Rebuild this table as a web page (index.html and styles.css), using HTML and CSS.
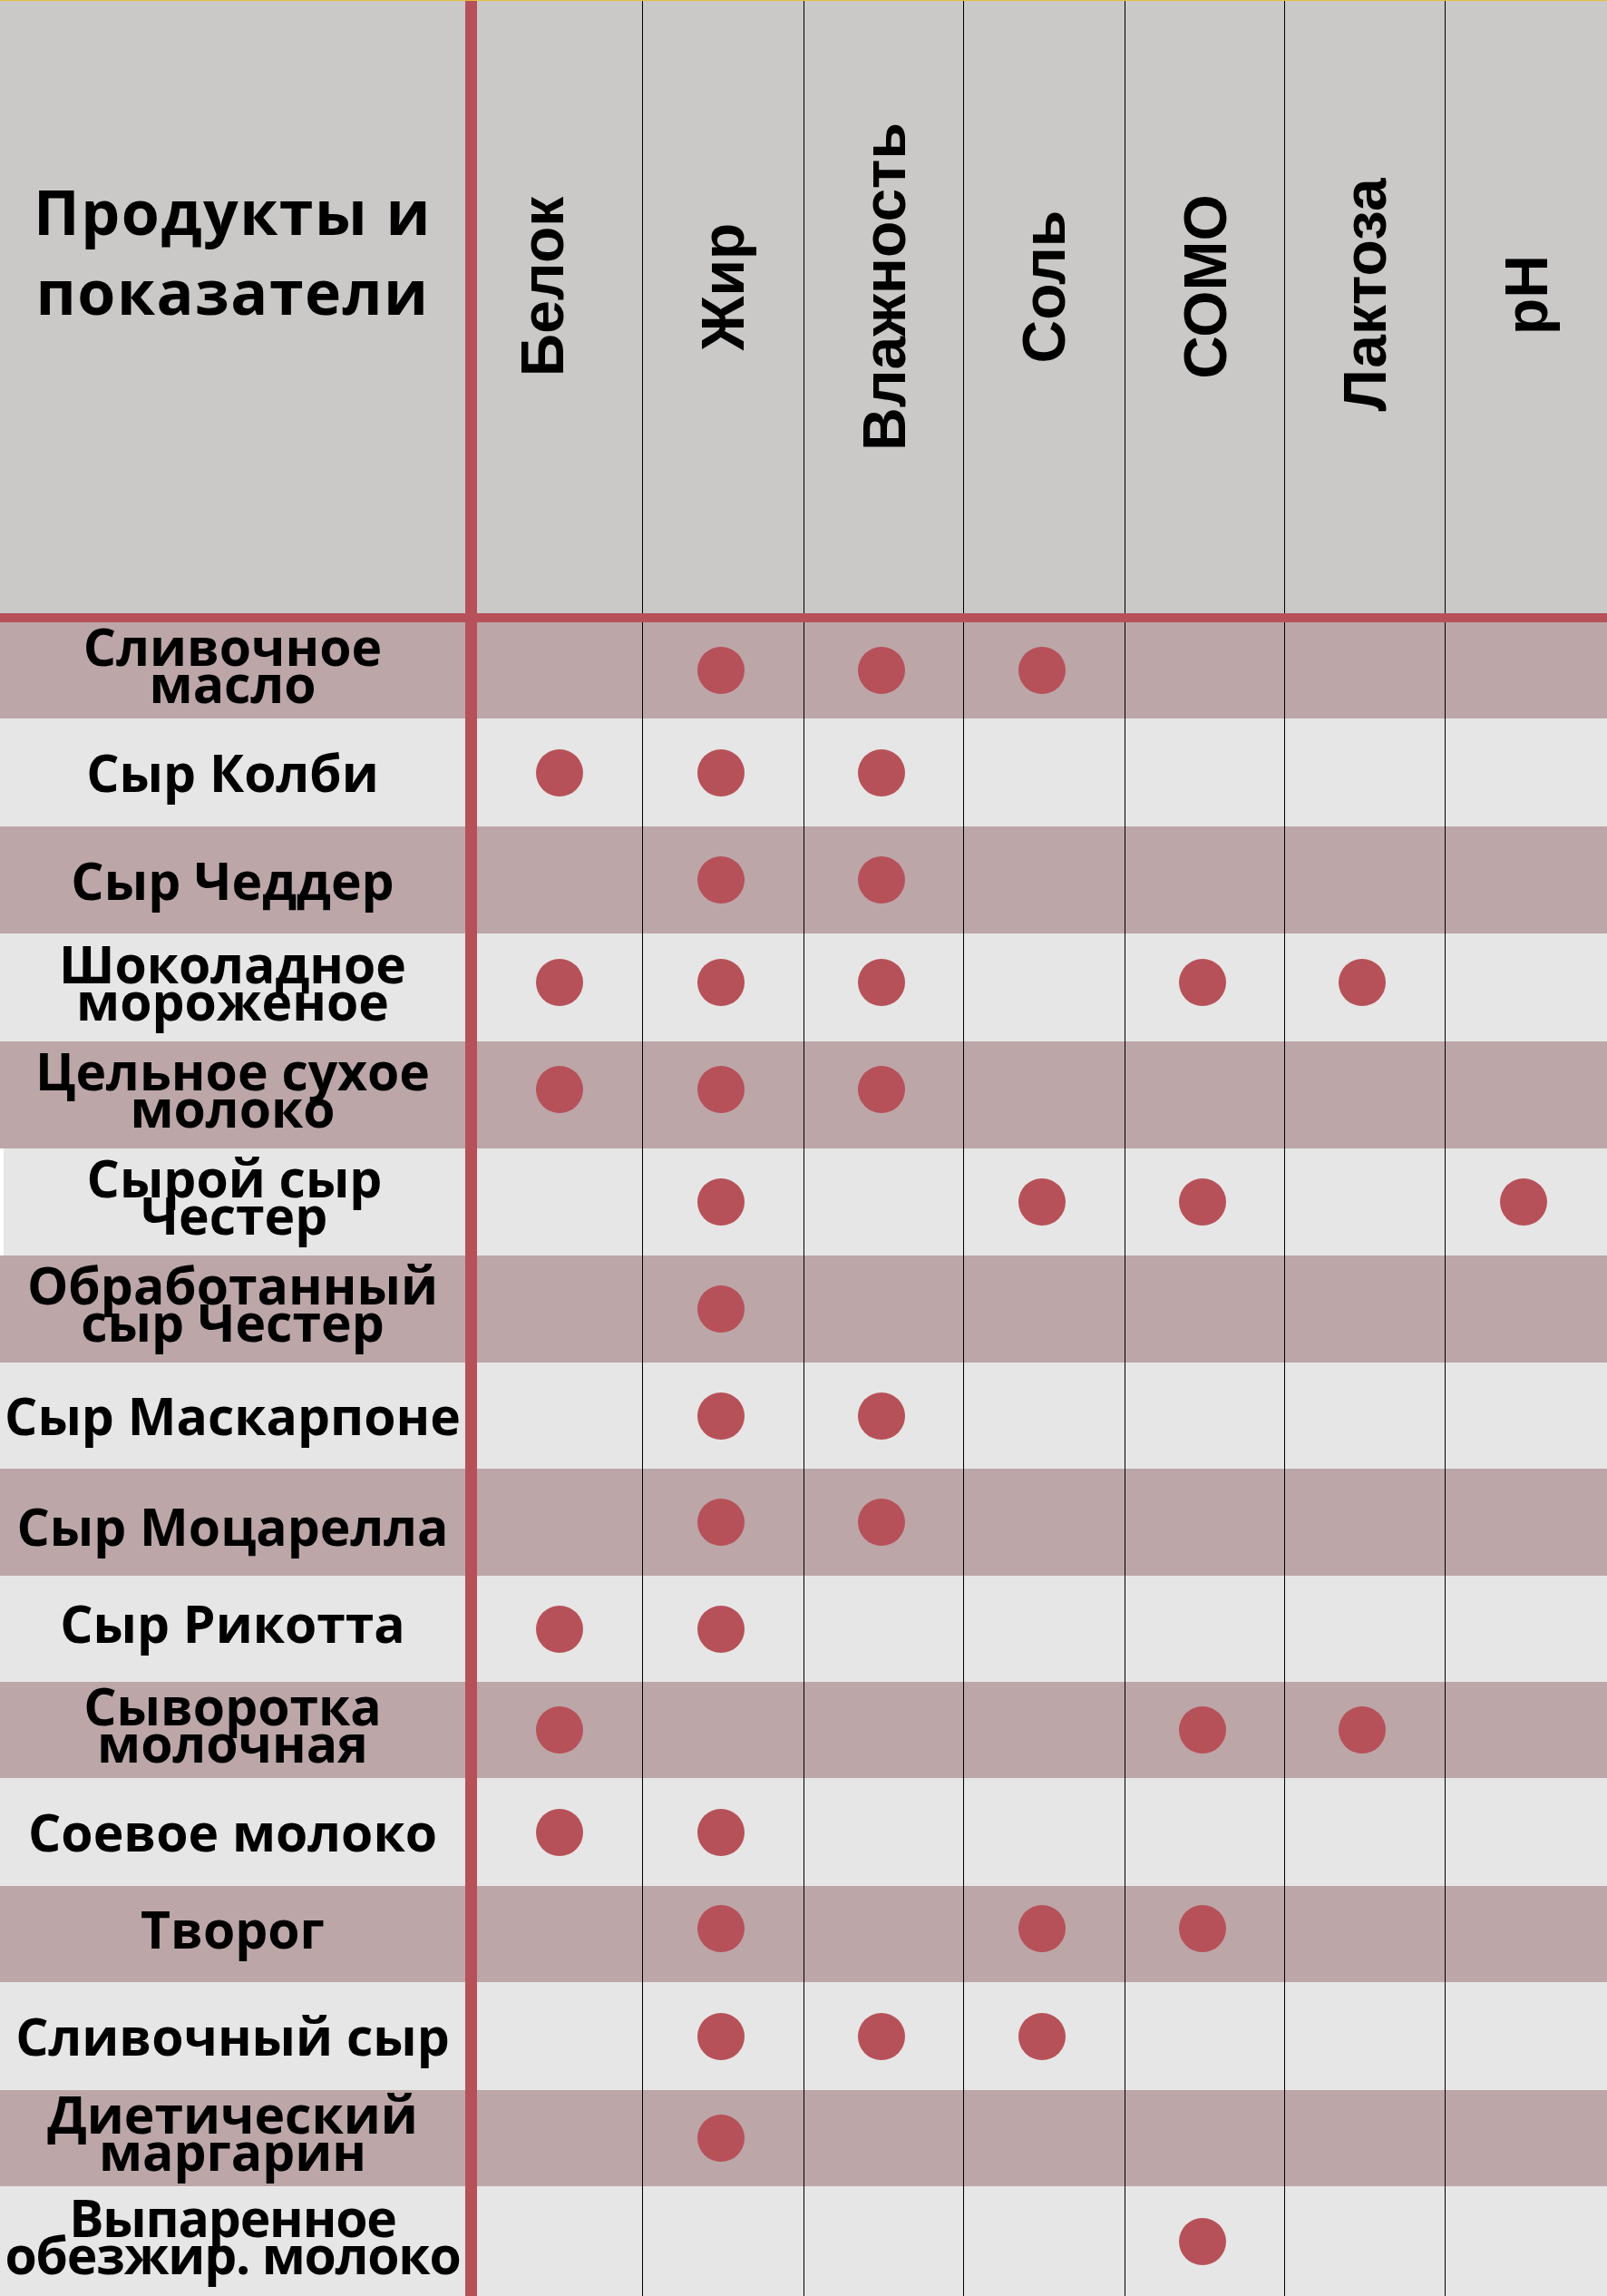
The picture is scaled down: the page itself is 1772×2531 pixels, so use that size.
FILE: index.html
```html
<!DOCTYPE html>
<html lang="ru">
<head>
<meta charset="utf-8">
<title>Продукты и показатели</title>
<link rel="stylesheet" href="styles.css">
</head>
<body>
<div class="chart">
  <div class="head cols">
    <div class="title">Продукты и<br>показатели</div>
    <div class="vr"></div>
    <div class="hcell c1"><span class="hlabel">Белок</span></div>
    <div class="hcell"><span class="hlabel">Жир</span></div>
    <div class="hcell"><span class="hlabel">Влажность</span></div>
    <div class="hcell"><span class="hlabel">Соль</span></div>
    <div class="hcell"><span class="hlabel">СОМО</span></div>
    <div class="hcell low"><span class="hlabel">Лактоза</span></div>
    <div class="hcell low"><span class="hlabel">pH</span></div>
  </div>
  <div class="hr"></div>

  <div class="row dark h106 cols">
    <div class="name two">Сливочное<br>масло</div><div class="vr"></div>
    <div class="cell c1"></div><div class="cell"><span class="dot"></span></div><div class="cell"><span class="dot"></span></div><div class="cell"><span class="dot"></span></div><div class="cell"></div><div class="cell"></div><div class="cell"></div>
  </div>
  <div class="row light h119 cols">
    <div class="name">Сыр Колби</div><div class="vr"></div>
    <div class="cell c1"><span class="dot"></span></div><div class="cell"><span class="dot"></span></div><div class="cell"><span class="dot"></span></div><div class="cell"></div><div class="cell"></div><div class="cell"></div><div class="cell"></div>
  </div>
  <div class="row dark h118 cols">
    <div class="name">Сыр Чеддер</div><div class="vr"></div>
    <div class="cell c1"></div><div class="cell"><span class="dot"></span></div><div class="cell"><span class="dot"></span></div><div class="cell"></div><div class="cell"></div><div class="cell"></div><div class="cell"></div>
  </div>
  <div class="row light h119 lift cols">
    <div class="name two">Шоколадное<br>мороженое</div><div class="vr"></div>
    <div class="cell c1"><span class="dot"></span></div><div class="cell"><span class="dot"></span></div><div class="cell"><span class="dot"></span></div><div class="cell"></div><div class="cell"><span class="dot"></span></div><div class="cell"><span class="dot"></span></div><div class="cell"></div>
  </div>
  <div class="row dark h118 lift cols">
    <div class="name two">Цельное сухое<br>молоко</div><div class="vr"></div>
    <div class="cell c1"><span class="dot"></span></div><div class="cell"><span class="dot"></span></div><div class="cell"><span class="dot"></span></div><div class="cell"></div><div class="cell"></div><div class="cell"></div><div class="cell"></div>
  </div>
  <div class="row light h118 cols">
    <div class="name two edge">Сырой сыр<br>Честер</div><div class="vr"></div>
    <div class="cell c1"></div><div class="cell"><span class="dot"></span></div><div class="cell"></div><div class="cell"><span class="dot"></span></div><div class="cell"><span class="dot"></span></div><div class="cell"></div><div class="cell"><span class="dot"></span></div>
  </div>
  <div class="row dark h118 cols">
    <div class="name two">Обработанный<br>сыр Честер</div><div class="vr"></div>
    <div class="cell c1"></div><div class="cell"><span class="dot"></span></div><div class="cell"></div><div class="cell"></div><div class="cell"></div><div class="cell"></div><div class="cell"></div>
  </div>
  <div class="row light h117 cols">
    <div class="name">Сыр Маскарпоне</div><div class="vr"></div>
    <div class="cell c1"></div><div class="cell"><span class="dot"></span></div><div class="cell"><span class="dot"></span></div><div class="cell"></div><div class="cell"></div><div class="cell"></div><div class="cell"></div>
  </div>
  <div class="row dark h118 cols">
    <div class="name down">Сыр Моцарелла</div><div class="vr"></div>
    <div class="cell c1"></div><div class="cell"><span class="dot"></span></div><div class="cell"><span class="dot"></span></div><div class="cell"></div><div class="cell"></div><div class="cell"></div><div class="cell"></div>
  </div>
  <div class="row light h117 cols">
    <div class="name up">Сыр Рикотта</div><div class="vr"></div>
    <div class="cell c1"><span class="dot"></span></div><div class="cell"><span class="dot"></span></div><div class="cell"></div><div class="cell"></div><div class="cell"></div><div class="cell"></div><div class="cell"></div>
  </div>
  <div class="row dark h106 cols">
    <div class="name two">Сыворотка<br>молочная</div><div class="vr"></div>
    <div class="cell c1"><span class="dot"></span></div><div class="cell"></div><div class="cell"></div><div class="cell"></div><div class="cell"><span class="dot"></span></div><div class="cell"><span class="dot"></span></div><div class="cell"></div>
  </div>
  <div class="row light h119 cols">
    <div class="name">Соевое молоко</div><div class="vr"></div>
    <div class="cell c1"><span class="dot"></span></div><div class="cell"><span class="dot"></span></div><div class="cell"></div><div class="cell"></div><div class="cell"></div><div class="cell"></div><div class="cell"></div>
  </div>
  <div class="row dark h106 lift cols">
    <div class="name up">Творог</div><div class="vr"></div>
    <div class="cell c1"></div><div class="cell"><span class="dot"></span></div><div class="cell"></div><div class="cell"><span class="dot"></span></div><div class="cell"><span class="dot"></span></div><div class="cell"></div><div class="cell"></div>
  </div>
  <div class="row light h119 cols">
    <div class="name">Сливочный сыр</div><div class="vr"></div>
    <div class="cell c1"></div><div class="cell"><span class="dot"></span></div><div class="cell"><span class="dot"></span></div><div class="cell"><span class="dot"></span></div><div class="cell"></div><div class="cell"></div><div class="cell"></div>
  </div>
  <div class="row dark h106 cols">
    <div class="name two">Диетический<br>маргарин</div><div class="vr"></div>
    <div class="cell c1"></div><div class="cell"><span class="dot"></span></div><div class="cell"></div><div class="cell"></div><div class="cell"></div><div class="cell"></div><div class="cell"></div>
  </div>
  <div class="row light h121 cols">
    <div class="name two tight">Выпаренное<br>обезжир. молоко</div><div class="vr"></div>
    <div class="cell c1"></div><div class="cell"></div><div class="cell"></div><div class="cell"></div><div class="cell"><span class="dot"></span></div><div class="cell"></div><div class="cell"></div>
  </div>
</div>
</body>
</html>
```

FILE: styles.css
```css
html, body {
  margin: 0;
  padding: 0;
}

body {
  background: #e6e6e6;
  color: #000;
}

.chart {
  width: 1772px;
  height: 2531px;
  overflow: hidden;
}

.cols {
  display: grid;
  grid-template-columns: 513px 13px 182px 178px 176px 178px 176px 177px 179px;
}

.vr {
  background: #b75159;
}

.head {
  height: 676px;
  box-sizing: border-box;
  border-top: 1px solid #e6bf3c;
  background: #cac9c7;
}

.title {
  display: flex;
  align-items: center;
  justify-content: center;
  text-align: center;
  padding-bottom: 124px;
  font-family: "Open Sans", "Noto Sans", sans-serif;
  font-weight: 700;
  font-size: 68px;
  letter-spacing: 1.5px;
  line-height: 88px;
  white-space: nowrap;
}

.hcell {
  display: flex;
  align-items: center;
  justify-content: center;
  padding-bottom: 46px;
  border-left: 1px solid #000;
  min-width: 0;
}

.hcell.c1 {
  border-left: none;
  padding-right: 37px;
}

.hcell.low {
  padding-bottom: 28px;
}

.hlabel {
  flex: none;
  display: block;
  transform: rotate(-90deg);
  font-family: "Liberation Sans", Arial, sans-serif;
  font-weight: 700;
  font-size: 66px;
  line-height: 1;
  white-space: nowrap;
}

.hr {
  height: 10px;
  background: #b75159;
}

.row.dark {
  background: #bca6a8;
}

.row.light {
  background: #e6e6e6;
}

.h106 { height: 106px; }
.h117 { height: 117px; }
.h118 { height: 118px; }
.h119 { height: 119px; }
.h121 { height: 121px; }

.name {
  display: flex;
  align-items: center;
  justify-content: center;
  text-align: center;
  font-family: "Open Sans", "Noto Sans", sans-serif;
  font-weight: 700;
  font-size: 57px;
  line-height: 41px;
  white-space: nowrap;
  min-width: 0;
}

.name.two {
  padding-bottom: 12px;
}

.name.up {
  padding-bottom: 12px;
}

.name.down {
  padding-top: 8px;
}

.name.tight {
  letter-spacing: -1.2px;
}

.name.edge {
  border-left: 4px solid #fff;
}

.cell {
  display: flex;
  align-items: center;
  justify-content: center;
  border-left: 1px solid #000;
  padding-right: 6px;
}

.cell.c1 {
  border-left: none;
  padding-right: 0;
}

.lift .cell {
  padding-bottom: 12px;
}

.dot {
  width: 52px;
  height: 52px;
  border-radius: 50%;
  background: #b75159;
}
```
